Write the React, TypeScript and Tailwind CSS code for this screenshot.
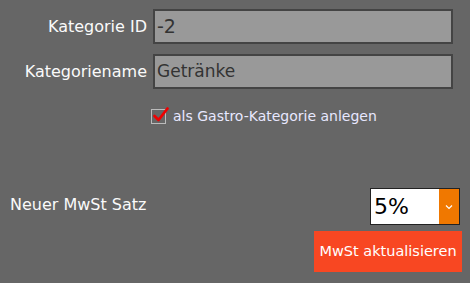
import React from "react";

export default function App() {
  const font = { fontFamily: "Tahoma, 'DejaVu Sans', Verdana, sans-serif" };
  return (
    <div className="w-[470px] h-[283px] bg-[#666666] text-white overflow-hidden" style={font}>
      <div className="flex flex-col pt-[9px]">
        <div className="flex items-center h-[35px]">
          <div className="w-[147px] text-right text-[16px] text-[#fafafa] whitespace-nowrap">Kategorie ID</div>
          <div className="ml-[6px] w-[300px] h-[35px] bg-[#999999] border-2 border-[#444444] flex items-center pl-[2px] text-[19px] text-[#333333]">-2</div>
        </div>
        <div className="flex items-center h-[35px] mt-[10px]">
          <div className="w-[147px] text-right text-[16px] text-[#fafafa] whitespace-nowrap">Kategoriename</div>
          <div className="ml-[6px] w-[300px] h-[35px] bg-[#999999] border-2 border-[#444444] flex items-center pl-[2px] text-[17px] text-[#333333]">Getränke</div>
        </div>
        <div className="flex items-center mt-[20px] pl-[151px] h-[15px]">
          <div className="relative w-[15px] h-[15px] border border-[#bbbbbb]">
            <svg className="absolute -top-[4px] left-0" width="18" height="18" viewBox="0 0 18 18">
              <path d="M2.5 10 L6.5 14 L15.5 2.5" stroke="#ee0000" strokeWidth="2.8" fill="none" strokeLinecap="round" strokeLinejoin="round" />
            </svg>
          </div>
          <span className="ml-[7px] text-[14px] text-[#e8e8ff] whitespace-nowrap">als Gastro-Kategorie anlegen</span>
        </div>
        <div className="flex items-center justify-between mt-[64px] pl-[10px] pr-[10px]">
          <span className="text-[16px] text-[#fafafa] -mt-[4px] whitespace-nowrap">Neuer MwSt Satz</span>
          <div className="flex h-[37px] border border-[#222222]">
            <div className="w-[68px] bg-white text-black text-[22px] flex items-center pl-[3px]">5%</div>
            <div className="w-[20px] bg-[#f07800] flex items-center justify-center">
              <svg width="8" height="6" viewBox="0 0 8 6"><path d="M1 1.5 L4 4.5 L7 1.5" stroke="white" strokeWidth="1.2" fill="none" /></svg>
            </div>
          </div>
        </div>
        <div className="flex justify-end pr-[8px] mt-[6px]">
          <button className="w-[148px] h-[41px] bg-[#f84722] text-white text-[14.5px] whitespace-nowrap">MwSt aktualisieren</button>
        </div>
      </div>
    </div>
  );
}
